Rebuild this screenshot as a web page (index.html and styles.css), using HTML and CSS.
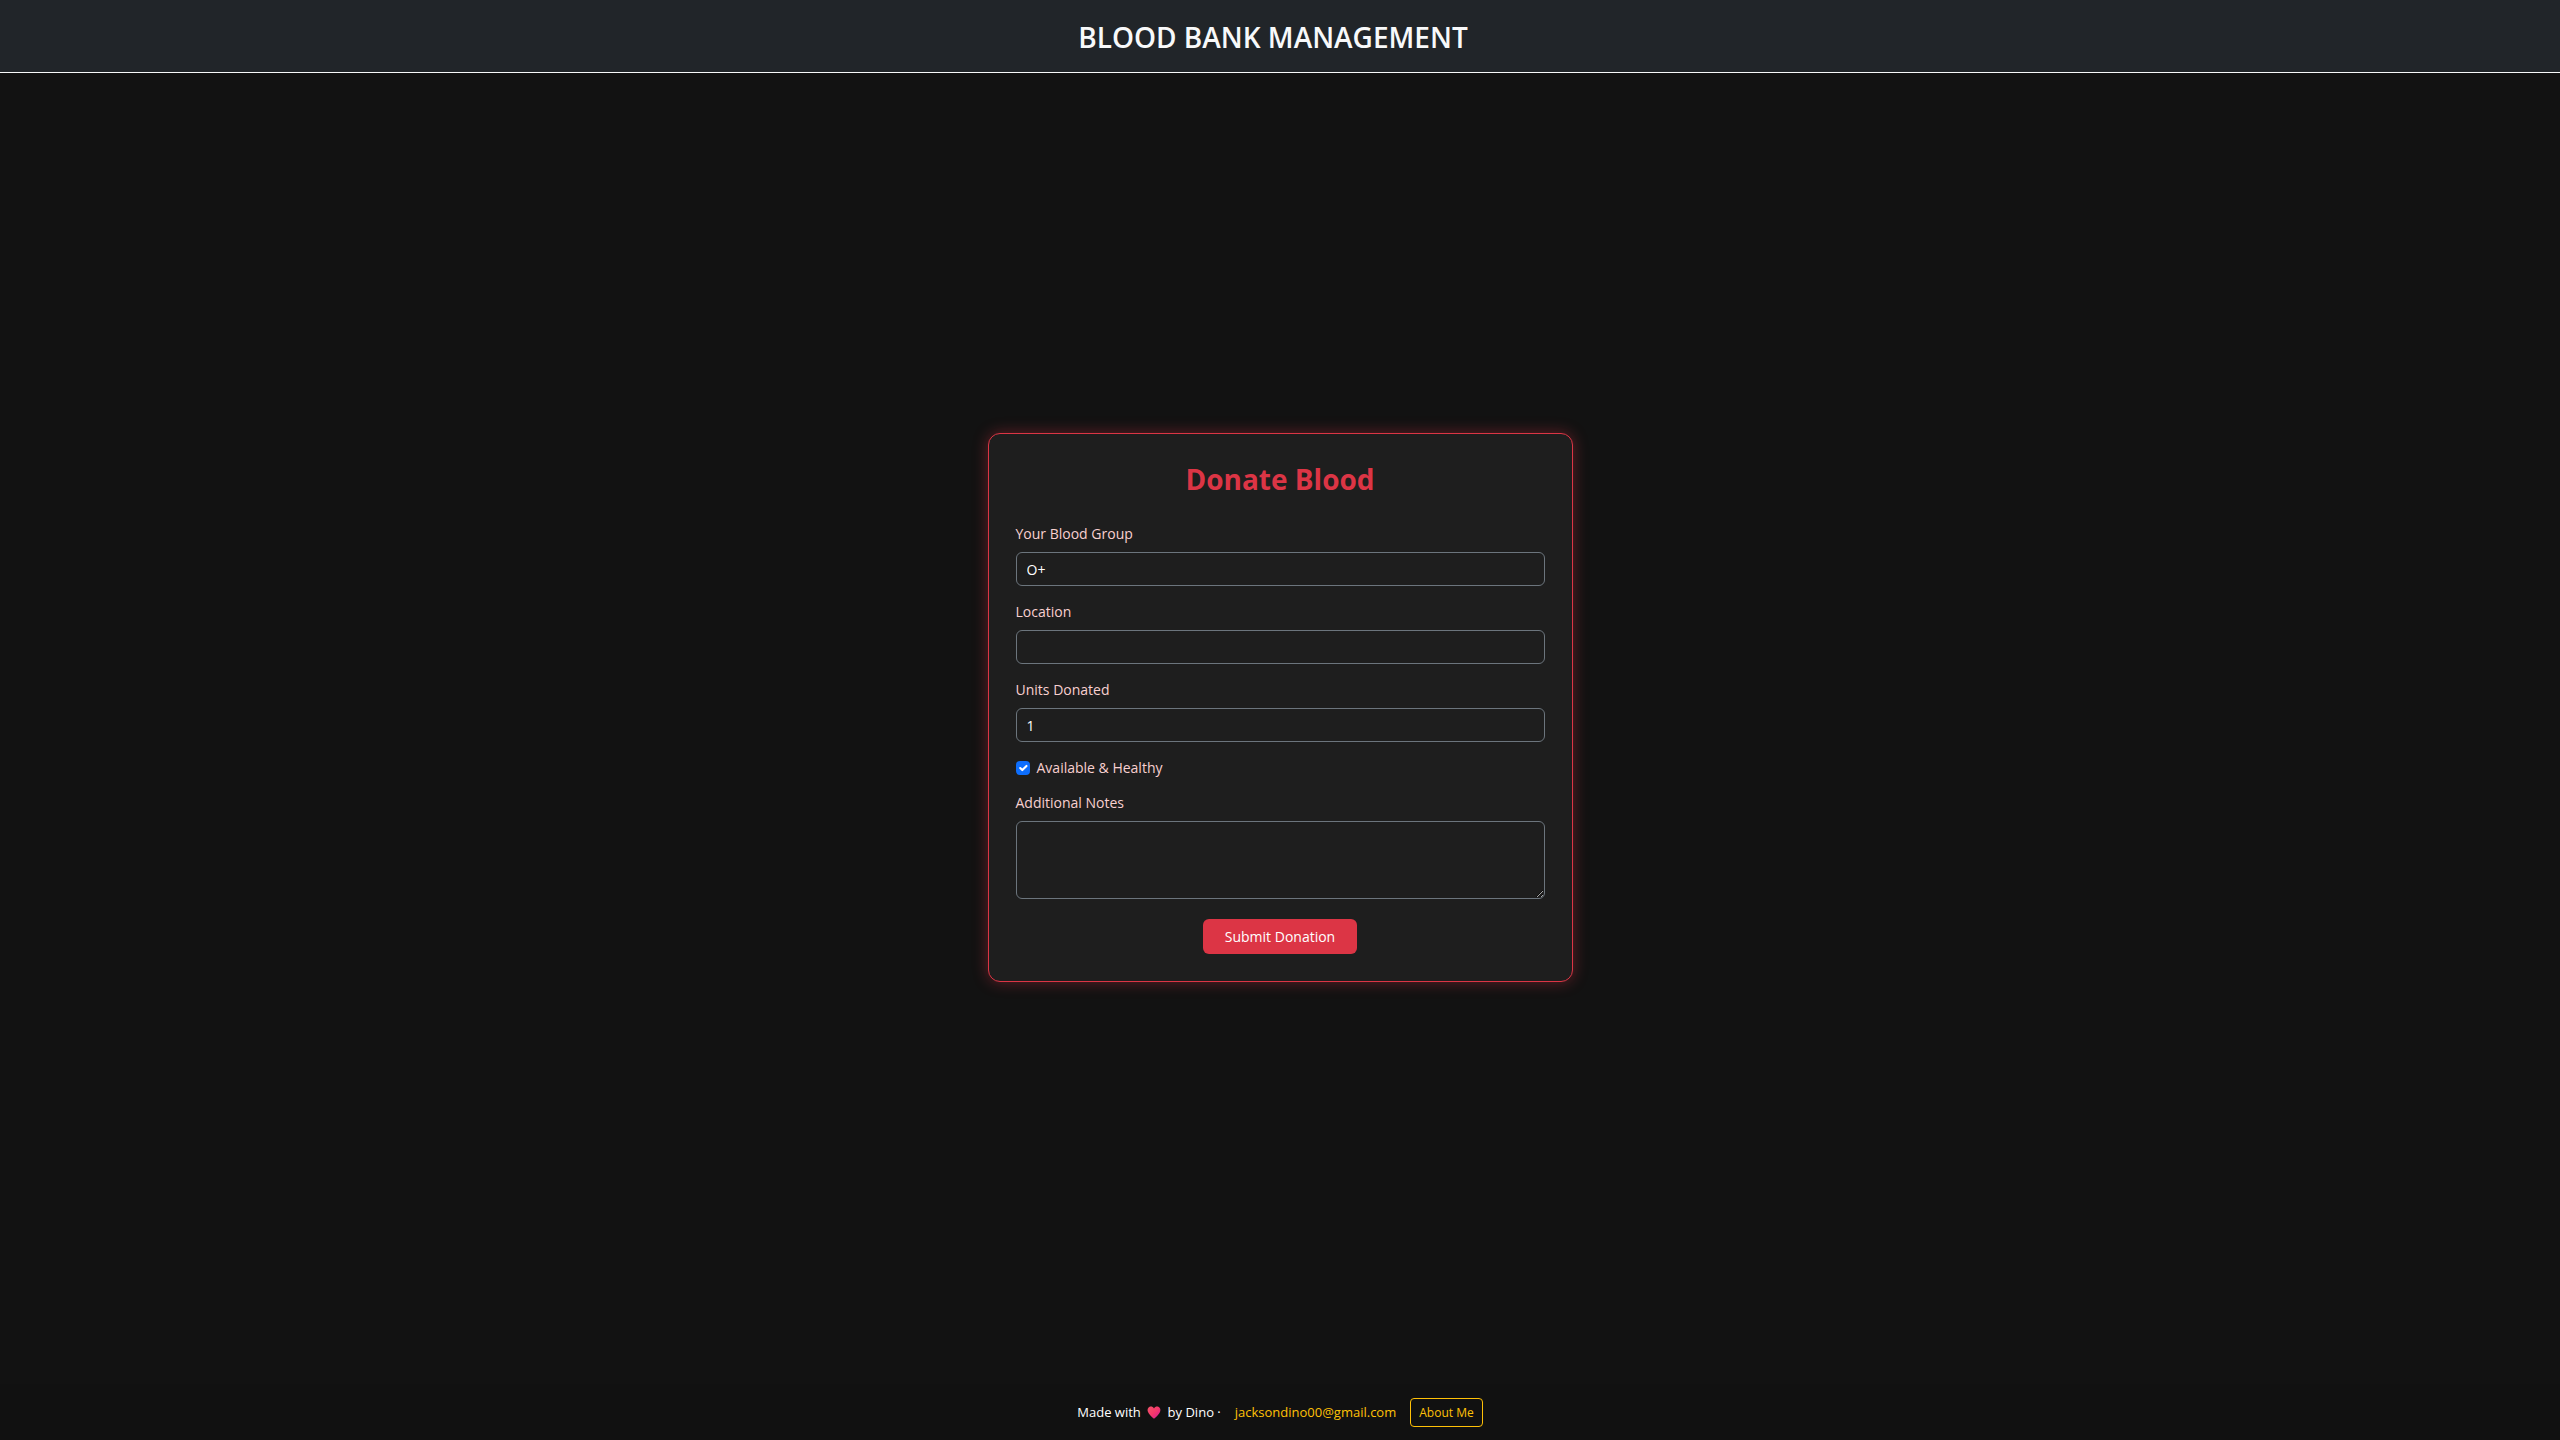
FILE: index.html
```html
<!DOCTYPE html>
<html lang="en">
<head>
  <meta charset="utf-8">
  <meta name="viewport" content="width=device-width, initial-scale=1">
  <title>Donate Blood</title>
  <link rel="stylesheet" href="styles.css">
</head>
<body>
  <header class="site-header">
    <h1 class="site-title">BLOOD BANK MANAGEMENT</h1>
  </header>

  <main class="main">
    <form class="card">
      <h2 class="card-title">Donate Blood</h2>
      <div class="field">
        <label for="group">Your Blood Group</label>
        <select class="control" id="group">
          <option selected>O+</option>
          <option>O-</option>
          <option>A+</option>
          <option>A-</option>
          <option>B+</option>
          <option>B-</option>
          <option>AB+</option>
          <option>AB-</option>
        </select>
      </div>
      <div class="field">
        <label for="location">Location</label>
        <input class="control" id="location" type="text">
      </div>
      <div class="field">
        <label for="units">Units Donated</label>
        <input class="control" id="units" type="number" min="1" value="1">
      </div>
      <div class="check">
        <input class="check-input" id="healthy" type="checkbox" checked>
        <label for="healthy">Available &amp; Healthy</label>
      </div>
      <div class="field field-notes">
        <label for="notes">Additional Notes</label>
        <textarea class="control notes" id="notes"></textarea>
      </div>
      <button class="submit" type="submit">Submit Donation</button>
    </form>
  </main>

  <footer class="site-footer">
    <span class="credit">Made with
      <svg class="heart" viewBox="0 0 14 13" role="img" aria-label="love">
        <defs>
          <linearGradient id="heart-fill" x1="0" y1="0" x2="1" y2="1">
            <stop offset="0" stop-color="#f2566a"/>
            <stop offset="0.5" stop-color="#f5386b"/>
            <stop offset="1" stop-color="#d0189c"/>
          </linearGradient>
        </defs>
        <path fill="url(#heart-fill)" d="M7 2.400C8 .4 10 0 11.400 .7c2 .9 2.500 3.200 1.600 5.200C12 8.400 9.500 10.500 7 12.700 4.500 10.500 2 8.400 1 5.900.1 3.900.6 1.600 2.600.7 4 0 6 .4 7 2.400z"/>
      </svg>
      by Dino ·</span>
    <a class="mail" href="mailto:jacksondino00@gmail.com">jacksondino00@gmail.com</a>
    <a class="about" href="#about">About Me</a>
  </footer>
</body>
</html>
```
FILE: styles.css
```css
* {
  box-sizing: border-box;
}

body {
  margin: 0;
  min-height: 100vh;
  display: flex;
  flex-direction: column;
  background: #121212;
  color: #fff;
  font: 14px/21px "Segoe UI", "Open Sans", "Noto Sans", sans-serif;
}

.site-header {
  padding: 19px 28px 17px 14px;
  background: #212529;
  border-bottom: 1px solid #f8f9fa;
  text-align: center;
}

.site-title,
.card-title {
  margin: 0;
  font-size: 28px;
  line-height: 36px;
}

.site-title {
  color: #f8f9fa;
  font-weight: 600;
}

.main {
  flex: 1;
  display: flex;
  align-items: center;
  justify-content: center;
  margin-bottom: 42px;
}

.card {
  width: 100%;
  max-width: 585px;
  padding: 27px;
  display: flex;
  flex-direction: column;
  background: #1e1e1e;
  border: 1px solid #dc3545;
  border-radius: 12px;
  box-shadow: 0 0 15px rgba(220, 53, 69, 0.4);
}

.card-title {
  margin-bottom: 26px;
  color: #dc3545;
  font-weight: 700;
  text-align: center;
}

.field {
  display: flex;
  flex-direction: column;
  gap: 8px;
  margin-bottom: 15px;
}

.field label,
.check label {
  color: #f8d0d0;
}

.control {
  width: 100%;
  height: 34px;
  margin: 0;
  padding: 5px 10px;
  appearance: none;
  background: #1e1e1e;
  border: 1px solid #6c757d;
  border-radius: 6px;
  color: #fff;
  font: inherit;
}

.control[type="number"] {
  appearance: textfield;
}

.notes {
  height: 78px;
  resize: vertical;
}

.check {
  display: flex;
  align-items: center;
  gap: 7px;
  margin-bottom: 14px;
}

.check-input {
  width: 14px;
  height: 14px;
  margin: 0;
  appearance: none;
  border-radius: 4px;
  background: #0d6efd;
}

.check-input:checked {
  background: #0d6efd url("data:image/svg+xml,%3Csvg xmlns='http://www.w3.org/2000/svg' viewBox='0 0 20 20'%3E%3Cpath fill='none' stroke='%23fff' stroke-linecap='round' stroke-linejoin='round' stroke-width='3' d='m6 10 3 3 6-6'/%3E%3C/svg%3E") center / contain no-repeat;
}

.field-notes {
  margin-bottom: 20px;
}

.submit {
  align-self: center;
  height: 35px;
  padding: 0 22px;
  background: #dc3545;
  border: 0;
  border-radius: 6px;
  color: #fff;
  font: inherit;
}

.site-footer {
  display: flex;
  align-items: center;
  justify-content: center;
  gap: 14px;
  padding: 14px 14px 13px;
  background: #111;
  font-size: 13px;
}

.heart {
  width: 14px;
  height: 13px;
  margin: 0 3px;
  vertical-align: -2px;
}

.mail,
.about {
  color: #ffc107;
  text-decoration: none;
}

.about {
  padding: 3px 8px;
  border: 1px solid #ffc107;
  border-radius: 4px;
  font-size: 12px;
}
```
